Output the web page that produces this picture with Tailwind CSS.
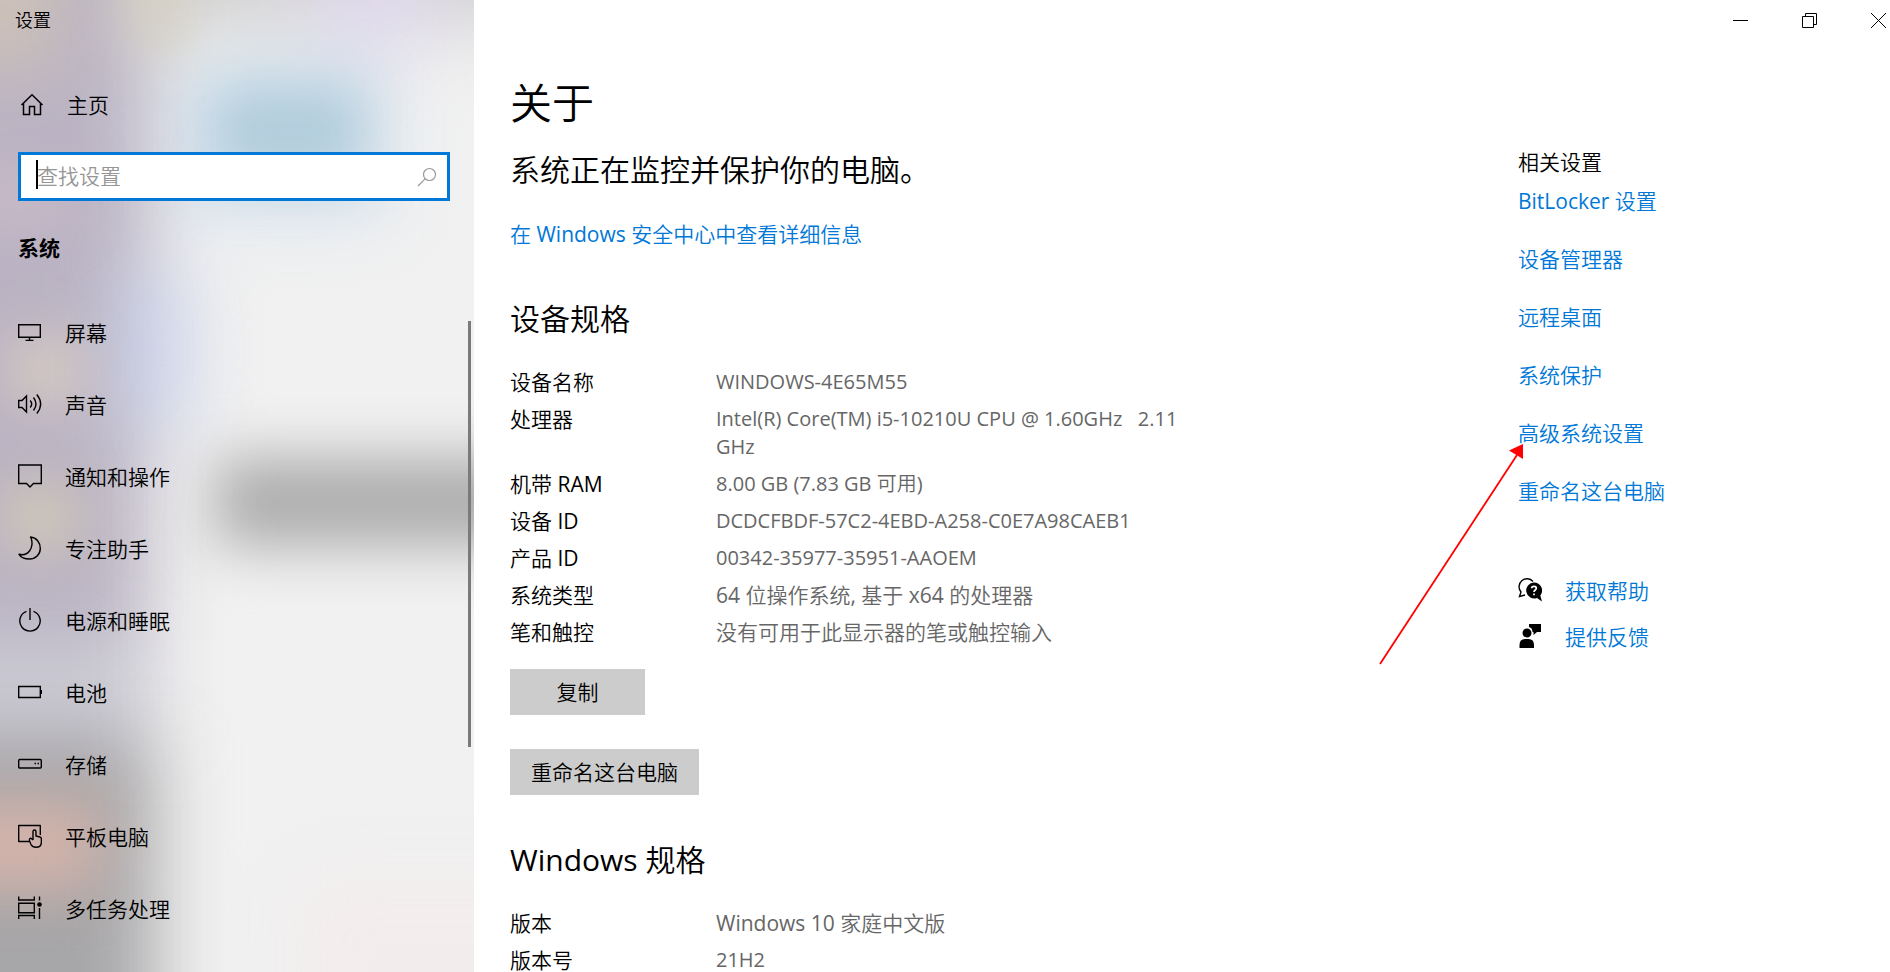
<!DOCTYPE html>
<html lang="zh-CN">
<head>
    <meta charset="UTF-8">
    <meta name="viewport" content="width=device-width, initial-scale=1.0">
    <title>设置</title>
    <script src="https://cdn.jsdelivr.net/npm/@tailwindcss/browser@4"></script>
</head>
<body class="flex h-screen overflow-hidden bg-white font-['Open_Sans','Noto_Sans_CJK_SC_DemiLight','Noto_Sans_CJK_SC',sans-serif] text-[21px] leading-7 text-black">
    <!-- Sidebar -->
    <aside class="relative isolate flex w-[474px] shrink-0 flex-col overflow-hidden bg-[#f0f0f1]">
        <!-- Acrylic backdrop -->
        <svg class="absolute inset-0 -z-10 h-full w-full" viewBox="0 0 474 972" preserveAspectRatio="none" aria-hidden="true">
            <defs>
                <filter id="soft" x="-100%" y="-100%" width="300%" height="300%" color-interpolation-filters="sRGB"><feGaussianBlur stdDeviation="36"/></filter>
                <filter id="soft-sm" x="-100%" y="-100%" width="300%" height="300%" color-interpolation-filters="sRGB"><feGaussianBlur stdDeviation="28"/></filter>
            </defs>
            <rect width="474" height="972" fill="#f1f1f1"/>
            <g filter="url(#soft)">
                <rect x="-180" y="-180" width="328" height="1340" fill="#bab3c3"/>
                <rect x="-180" y="-180" width="240" height="250" fill="#cdc1b8"/>
                <rect x="140" y="-180" width="530" height="205" fill="#d2d1d2"/>
                <rect x="320" y="-80" width="110" height="130" fill="#dfd8ec"/>
                <rect x="115" y="270" width="75" height="160" fill="#ccd3ea"/>
                <rect x="-180" y="640" width="320" height="90" fill="#ccccd4"/>
                <rect x="-180" y="740" width="335" height="420" fill="#a7a6a8"/>
                <rect x="170" y="60" width="220" height="160" fill="#dce6f0"/>
                <rect x="300" y="880" width="300" height="200" fill="#f3ecec"/>
            </g>
            <g filter="url(#soft-sm)">
                <rect x="130" y="-80" width="50" height="130" fill="#d8d3c0"/>
                <rect x="10" y="340" width="70" height="60" fill="#dbcfc2"/>
                <rect x="5" y="485" width="70" height="65" fill="#d3cbb6"/>
                <rect x="-100" y="175" width="170" height="45" fill="#ccbcc8"/>
                <rect x="-100" y="800" width="200" height="90" fill="#d3b3aa"/>
                <rect x="210" y="84" width="155" height="95" fill="#b0ccdb"/>
                <rect x="215" y="457" width="400" height="90" fill="#adadad"/>
            </g>
        </svg>

        <div class="flex h-10 items-center px-[15px] text-lg">设置</div>

        <a href="#home" class="mt-[41px] flex h-12 items-center gap-[23px] px-5">
            <svg class="size-6" viewBox="0 0 24 24" fill="none" stroke="currentColor" stroke-width="1.5" aria-hidden="true">
                <path d="M1.5 12 12 1.700 22.500 12M3.500 10.500V21.500H9.500V13.500H14.500V21.500H20.500V10.500"/>
            </svg>
            主页
        </a>

        <form class="relative mt-[23px] mr-6 ml-[18px] flex h-[49px] items-center border-3 border-[#0078d7] bg-white px-4">
            <input type="search" aria-label="查找设置" placeholder="查找设置" class="h-full min-w-0 flex-1 bg-transparent pb-0.5 caret-transparent outline-none placeholder:text-[#969696]">
            <span class="absolute top-[5px] left-[15px] h-[29px] w-0.5 bg-black"></span>
            <svg class="-mr-1.5 size-5" viewBox="0 0 20 20" fill="none" stroke="#999" stroke-width="1.2" aria-hidden="true">
                <circle cx="12.500" cy="7.500" r="6"/>
                <path d="M8.300 11.700 1 19"/>
            </svg>
        </form>

        <h2 class="mt-[21px] flex h-[50px] items-center px-[18px] font-['Noto_Sans_CJK_SC',sans-serif] font-bold">系统</h2>

        <nav class="mt-[25px] flex flex-col">
            <a href="#display" class="flex h-18 items-center gap-[23px] px-[18px]">
                <svg class="mb-0.5 size-6" viewBox="0 0 24 24" fill="none" stroke="currentColor" stroke-width="1.4" aria-hidden="true">
                    <path d="M.7 4.700H22.300V17.300H.7ZM11.500 17.300V20.300M7.500 20.400H15.500"/>
                </svg>
                屏幕
            </a>
            <a href="#sound" class="flex h-18 items-center gap-[23px] px-[18px]">
                <svg class="mb-0.5 size-6" viewBox="0 0 24 24" fill="none" stroke="currentColor" stroke-width="1.4" aria-hidden="true">
                    <path d="M.7 8.500H4L8.500 4V20L4 15.500H.7ZM12.200 8.500Q15.200 12 12.200 15.500M15.500 5.500Q20.500 12 15.500 18.500M18.800 2.500Q26.500 12 18.800 21.500"/>
                </svg>
                声音
            </a>
            <a href="#notifications" class="flex h-18 items-center gap-[23px] px-[18px]">
                <svg class="mb-0.5 size-6" viewBox="0 0 24 24" fill="none" stroke="currentColor" stroke-width="1.4" aria-hidden="true">
                    <path d="M.7 1H23.300V19.500H15.500L12 23 8.500 19.500H.7Z"/>
                </svg>
                通知和操作
            </a>
            <a href="#focus" class="flex h-18 items-center gap-[23px] px-[18px]">
                <svg class="mb-0.5 size-6" viewBox="0 0 24 24" fill="none" stroke="currentColor" stroke-width="1.4" stroke-linejoin="round" aria-hidden="true">
                    <path d="M12.500 1C18.500 1.500 22.300 6.500 22.300 12.500C22.300 18.500 17.500 23 11.500 23C7 23 3 21.500 1 18.300C5 19.300 9 18.300 11.500 15C14.500 11 15 5 12.500 1Z"/>
                </svg>
                专注助手
            </a>
            <a href="#power" class="flex h-18 items-center gap-[23px] px-[18px]">
                <svg class="mb-0.5 size-6" viewBox="0 0 24 24" fill="none" stroke="currentColor" stroke-width="1.4" aria-hidden="true">
                    <path d="M12 0V12M8.500 3.300A10.200 10.200 0 1 0 15.500 3.300"/>
                </svg>
                电源和睡眠
            </a>
            <a href="#battery" class="flex h-18 items-center gap-[23px] px-[18px]">
                <svg class="mb-0.5 size-6" viewBox="0 0 24 24" fill="none" stroke="currentColor" stroke-width="1.4" aria-hidden="true">
                    <path d="M.7 6.500H22.300V17.500H.7Z"/>
                    <path d="M23.200 10V14" stroke-width="1.6"/>
                </svg>
                电池
            </a>
            <a href="#storage" class="flex h-18 items-center gap-[23px] px-[18px]">
                <svg class="mb-0.5 size-6" viewBox="0 0 24 24" fill="none" stroke="currentColor" stroke-width="1.4" aria-hidden="true">
                    <rect x=".7" y="7.500" width="22.600" height="8.500" rx="1"/>
                    <path d="M16.500 11.500H18M19.500 11.500H21" stroke-width="1.5"/>
                </svg>
                存储
            </a>
            <a href="#tablet" class="flex h-18 items-center gap-[23px] px-[18px]">
                <svg class="mb-0.5 size-6" viewBox="0 0 24 24" fill="none" stroke="currentColor" stroke-width="1.4" stroke-linejoin="round" aria-hidden="true">
                    <path d="M11 17.500H.7V1.500H22.300V11"/>
                    <path d="M15 16V7.500Q15 6 16.500 6T18 7.500V12L22 13Q23.400 13.500 23.400 15V18Q23.400 23.300 18 23.300 14.500 23.300 13 20.500L11.500 17V15.500Q11.500 14 13 14.200L15 16"/>
                </svg>
                平板电脑
            </a>
            <a href="#multitasking" class="flex h-18 items-center gap-[23px] px-[18px]">
                <svg class="mb-0.5 size-6" viewBox="0 0 24 24" fill="none" stroke="currentColor" stroke-width="1.4" aria-hidden="true">
                    <path d="M.7 .500V4H16.300V.500M.7 7.300H16.300V16.700H.7ZM.7 23V19.500H16.300V23M21.500 .500V4.500M21.500 12V23"/>
                    <circle cx="21.500" cy="8.500" r="2.300" fill="currentColor" stroke="none"/>
                </svg>
                多任务处理
            </a>
        </nav>

        <!-- Scroll thumb -->
        <div class="absolute top-[321px] right-[3px] h-[426px] w-[3px] bg-[#7a7a7a]"></div>
    </aside>

    <div class="flex min-w-0 flex-1 flex-col">
        <!-- Window controls -->
        <div class="flex h-10 shrink-0 items-center justify-end gap-[54px] pr-1">
            <button type="button" aria-label="最小化">
                <svg class="size-[15px]" viewBox="0 0 15 15" fill="none" stroke="currentColor"><path d="M0 7.500H15"/></svg>
            </button>
            <button type="button" aria-label="还原">
                <svg class="size-[15px]" viewBox="0 0 15 15" fill="none" stroke="currentColor"><path d="M.5 3.500H11.500V14.500H.5ZM3.500 3.500V.5H14.500V11.500H11.500"/></svg>
            </button>
            <button type="button" aria-label="关闭">
                <svg class="size-[15px]" viewBox="0 0 15 15" fill="none" stroke="currentColor"><path d="M0 0 15 15M15 0 0 15"/></svg>
            </button>
        </div>

        <div class="flex min-h-0 flex-1">
            <!-- Main Content -->
            <main class="min-w-0 flex-1 overflow-hidden pt-[35px] pl-9">
                <h1 class="text-[42px] leading-14">关于</h1>
                <p class="mt-[19px] text-3xl leading-10">系统正在监控并保护你的电脑。</p>
                <a href="#security" class="mt-[30px] block text-[#0078d7]">在 Windows 安全中心中查看详细信息</a>

                <h2 class="mt-[51px] text-3xl leading-10">设备规格</h2>
                <table class="mt-[29px] w-[690px] table-fixed text-left">
                    <tbody class="align-top">
                        <tr><th scope="row" class="w-[206px] pb-[9px] font-normal">设备名称</th><td class="pb-[9px] text-xl leading-7 text-[#666]">WINDOWS-4E65M55</td></tr>
                        <tr><th scope="row" class="pb-[9px] font-normal">处理器</th><td class="pb-[9px] text-xl leading-7 text-[#666]">Intel(R) Core(TM) i5-10210U CPU @ 1.60GHz &nbsp; 2.11 GHz</td></tr>
                        <tr><th scope="row" class="pb-[9px] font-normal">机带 RAM</th><td class="pb-[9px] text-xl leading-7 text-[#666]">8.00 GB (7.83 GB 可用)</td></tr>
                        <tr><th scope="row" class="pb-[9px] font-normal">设备 ID</th><td class="pb-[9px] text-xl leading-7 text-[#666]">DCDCFBDF-57C2-4EBD-A258-C0E7A98CAEB1</td></tr>
                        <tr><th scope="row" class="pb-[9px] font-normal">产品 ID</th><td class="pb-[9px] text-xl leading-7 text-[#666]">00342-35977-35951-AAOEM</td></tr>
                        <tr><th scope="row" class="pb-[9px] font-normal">系统类型</th><td class="pb-[9px] text-[#666]">64 位操作系统, 基于 x64 的处理器</td></tr>
                        <tr><th scope="row" class="pb-[9px] font-normal">笔和触控</th><td class="pb-[9px] text-[#666]">没有可用于此显示器的笔或触控输入</td></tr>
                    </tbody>
                </table>

                <button type="button" class="mt-3.5 block h-[46px] w-[135px] bg-[#ccc]">复制</button>
                <button type="button" class="mt-[34px] block h-[46px] bg-[#ccc] px-[21px]">重命名这台电脑</button>

                <h2 class="mt-[45px] text-3xl leading-10">Windows 规格</h2>
                <table class="mt-[29px] w-[690px] table-fixed text-left">
                    <tbody class="align-top">
                        <tr><th scope="row" class="w-[206px] pb-[9px] font-normal">版本</th><td class="pb-[9px] text-[#666]">Windows 10 家庭中文版</td></tr>
                        <tr><th scope="row" class="pb-[9px] font-normal">版本号</th><td class="pb-[9px] text-xl leading-7 text-[#666]">21H2</td></tr>
                    </tbody>
                </table>
            </main>

            <!-- Related settings -->
            <aside class="relative w-[372px] shrink-0 pt-[108px]">
                <h2>相关设置</h2>
                <ul class="mt-[11px] flex flex-col gap-[30px] text-[#0078d7]">
                    <li><a href="#bitlocker">BitLocker 设置</a></li>
                    <li><a href="#devices">设备管理器</a></li>
                    <li><a href="#remote">远程桌面</a></li>
                    <li><a href="#protection">系统保护</a></li>
                    <li><a href="#advanced">高级系统设置</a></li>
                    <li><a href="#rename">重命名这台电脑</a></li>
                </ul>
                <ul class="mt-[72px] flex flex-col gap-[18px]">
                    <li class="flex items-center gap-[23px]">
                        <svg class="mb-0.5 size-6" viewBox="0 0 24 24" aria-hidden="true">
                            <path d="M7 17 1.500 18.500 3 14A7.600 7.600 0 1 1 15 3.500" fill="none" stroke="#000" stroke-width="1.400"/>
                            <path d="M16 4.500A8 8 0 1 0 19 20L24 23.500 22.300 17.500A8 8 0 0 0 16 4.500Z"/>
                            <path d="M13.700 10.300Q13.700 8.300 16 8.300T18.300 10.300C18.300 12 16 12 16 14M16 15.500V17.300" fill="none" stroke="#fff" stroke-width="1.700"/>
                        </svg>
                        <a href="#help" class="text-[#0078d7]">获取帮助</a>
                    </li>
                    <li class="flex items-center gap-[23px]">
                        <svg class="mb-0.5 size-6" viewBox="0 0 24 24" aria-hidden="true">
                            <circle cx="9" cy="9" r="4.500"/>
                            <path d="M1.500 24V21Q1.500 15 7 15H10.500Q16 15 16 21V24ZM11 0H23V8H19L15.500 11V8H14.500Q14.500 4 11 3Z"/>
                        </svg>
                        <a href="#feedback" class="text-[#0078d7]">提供反馈</a>
                    </li>
                </ul>

                <!-- Pointer to the advanced settings link -->
                <svg class="pointer-events-none absolute top-[403px] -left-[140px] h-[223px] w-[147px]" viewBox="0 0 147 223" aria-hidden="true">
                    <path d="M2 221 139 12" stroke="#f00" stroke-width="1.800"/>
                    <path d="M131 7.500 145 1V16Z" fill="#f00"/>
                </svg>
            </aside>
        </div>
    </div>
</body>
</html>
